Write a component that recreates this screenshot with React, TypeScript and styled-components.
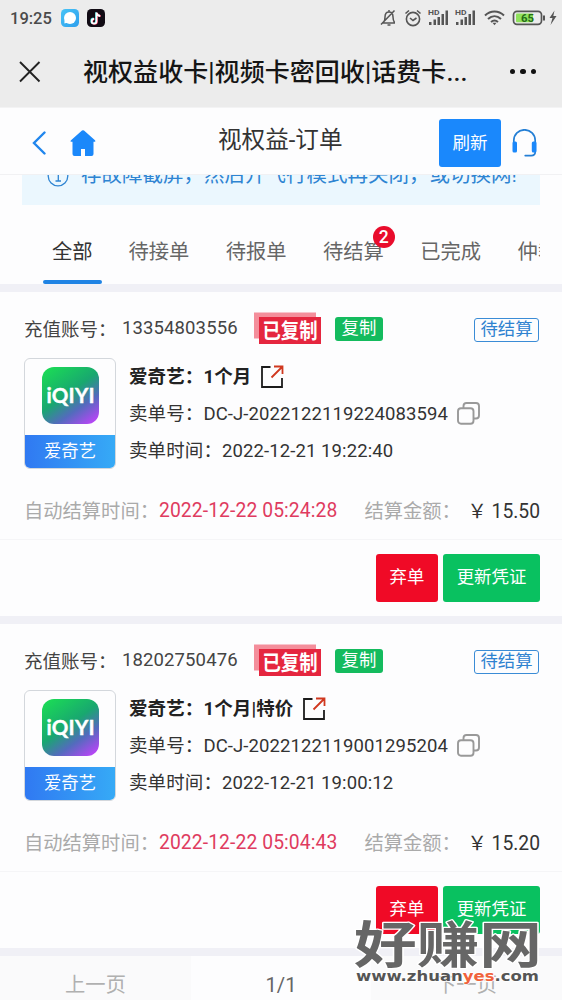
import React from 'react';
import styled, { createGlobalStyle } from 'styled-components';

const Global = createGlobalStyle`
  * { box-sizing: border-box; }
  body {
    margin: 0;
    background: #fdfdfe;
    color: #333;
    font-family: Roboto, "Noto Sans CJK SC", sans-serif;
    overflow: hidden;
  }
  svg { display: block; flex: none; }
`;

const Screen = styled.div`
  position: relative;
  width: 562px;
  height: 1000px;
  overflow: hidden;
  display: flex;
  flex-direction: column;
  white-space: nowrap;
`;

const StatusBar = styled.div`
  height: 36px;
  flex: none;
  display: flex;
  align-items: center;
  padding: 0 5px 0 10px;
  background: #ececec;
`;
const Clock = styled.span`
  width: 51px;
  font-size: 16.5px;
  font-weight: 500;
  letter-spacing: 0;
  color: #4a4a4a;
`;
const StatusIcons = styled.div`
  margin-left: auto;
`;
const AppIcons = styled.div`
  display: flex;
  gap: 8px;
`;

const TitleBar = styled.div`
  height: 71px;
  flex: none;
  display: flex;
  align-items: center;
  padding: 0 26px 0 19px;
  background: #ececec;
`;
const PageTitle = styled.div`
  margin: 2px 0 0 42px;
  width: 400px;
  font-size: 25px;
  line-height: 36px;
  font-weight: 500;
  color: #151515;
  letter-spacing: 0.06px;
`;
const Dots = styled.div`
  margin-left: auto;
  display: flex;
  gap: 5px;
  i { width: 5.5px; height: 5.5px; border-radius: 50%; background: #111; }
`;

const NavBar = styled.header`
  height: 68px;
  flex: none;
  display: flex;
  align-items: center;
  padding: 3px 24px 0 31px;
  border-top: 1px solid #f3f3f4;
  border-bottom: 1px solid #f1f1f3;
`;
const NavTitle = styled.h1`
  margin: -10px 0 0 122px;
  width: 221px;
  font-size: 23.6px;
  font-weight: 400;
  color: #333;
`;
const Refresh = styled.button`
  width: 62px;
  height: 48px;
  margin-right: 11px;
  padding: 0;
  border: 0;
  border-radius: 3px;
  background: #1a88fc;
  color: #fff;
  font: 400 17.5px/24px Roboto, "Noto Sans CJK SC", sans-serif;
`;

const Notice = styled.div`
  height: 30px;
  flex: none;
  margin: 0 22px;
  overflow: hidden;
  background: #ebf7fe;
  color: #2e84d2;
  display: flex;
  align-items: flex-start;
  padding-left: 25px;
`;
const NoticeText = styled.div`
  margin: -15px 0 0 12px;
  font-size: 20.5px;
  line-height: 30px;
`;
const NoticeIcon = styled.div`
  margin-top: -10px;
`;

const Tabs = styled.nav`
  height: 79px;
  flex: none;
  margin: 0 22px 0 43px;
  display: flex;
  overflow: hidden;
  gap: 36.4px;
`;
const Tab = styled.div<{ $active?: boolean }>`
  position: relative;
  flex: none;
  font-size: 20.3px;
  line-height: 30px;
  padding: 32px 0 0 ${(p) => (p.$active ? '9px' : '0')};
  width: ${(p) => (p.$active ? '49px' : 'auto')};
  color: ${(p) => (p.$active ? '#333' : '#666')};
`;
const Underline = styled.i`
  position: absolute;
  left: 0;
  bottom: 0;
  width: 59px;
  height: 4px;
  border-radius: 2px;
  background: #1f83e4;
`;
const Badge = styled.span`
  position: absolute;
  right: -11px;
  top: 21px;
  width: 22px;
  height: 22px;
  border-radius: 50%;
  background: #e90c2c;
  color: #fff;
  font-size: 17.5px;
  font-weight: 500;
  line-height: 22px;
  text-align: center;
`;

const Gap = styled.div`
  height: 8px;
  flex: none;
  background: #f0f0f6;
`;

const Card = styled.section`
  height: 324px;
  flex: none;
  font-size: 18.5px;
`;
const AccountRow = styled.div`
  height: 66px;
  display: flex;
  align-items: center;
  padding: 6px 23px 0 24px;
`;
const AccountLabel = styled.span`
  width: 98px;
  margin-top: -1px;
  color: #444;
`;
const Account = styled.span`
  width: 132px;
  color: #444;
  letter-spacing: 0.12px;
`;
const CopyTag = styled.span`
  margin: 2px 0 0 13px;
  width: 48px;
  height: 24px;
  border-radius: 3px;
  background: #14bb5e;
  color: #fff;
  font-size: 17.4px;
  line-height: 22px;
  text-align: center;
`;
const StateTag = styled.span`
  margin: 4px 0 0 auto;
  width: 65px;
  height: 24px;
  border: 1px solid #3b8cd6;
  border-radius: 3px;
  color: #2f82d0;
  font-size: 17.4px;
  line-height: 21px;
  text-align: center;
`;

const Body = styled.div`
  height: 111px;
  display: flex;
  gap: 13px;
  padding-left: 24px;
`;
const Thumb = styled.div`
  width: 92px;
  height: 111px;
  border: 1px solid #d3d7dc;
  border-radius: 6px;
  overflow: hidden;
  display: flex;
  flex-direction: column;
  align-items: center;
  padding-top: 8px;
`;
const ThumbName = styled.div`
  margin-top: 11px;
  align-self: stretch;
  flex: 1;
  background: linear-gradient(90deg, #3079f2, #36aaf6);
  color: #fff;
  font-size: 17.4px;
  line-height: 32px;
  text-align: center;
`;
const Lines = styled.div`
  display: grid;
  grid-template-rows: repeat(3, 37.3px);
`;
const Line = styled.div<{ $bold?: boolean }>`
  display: flex;
  align-items: center;
  gap: 9px;
  color: ${(p) => (p.$bold ? '#222' : '#333')};
  font-weight: ${(p) => (p.$bold ? 700 : 400)};
  letter-spacing: ${(p) => (p.$bold ? 0.12 : 0.1)}px;
`;
const LineText = styled.span`
  margin-top: -4px;
`;

const SettleRow = styled.div`
  height: 71px;
  display: flex;
  align-items: center;
  padding: 12px 22px 0 24px;
  border-bottom: 1px solid #f5f5f7;
  font-size: 19.3px;
  color: #aaa;
`;
const SettleLabel = styled.span`
  width: 135px;
  margin-top: -1px;
`;
const SettleTime = styled.span`
  margin-top: 1px;
  color: #df3b5f;
  letter-spacing: 0.1px;
`;
const AmountLabel = styled.span`
  margin: -1px 0 0 27px;
`;
const Amount = styled.span`
  margin: -1px 0 0 auto;
  color: #333;
`;
const Actions = styled.div`
  display: flex;
  justify-content: flex-end;
  gap: 5px;
  padding: 14px 22px 0;
`;
const ActionButton = styled.button<{ $danger?: boolean }>`
  width: ${(p) => (p.$danger ? 62 : 97)}px;
  height: 48px;
  padding: 0 0 3px;
  border: 0;
  border-radius: 3px;
  background: ${(p) => (p.$danger ? '#f00a26' : '#09c160')};
  color: #fff;
  font: 400 17.4px/24px Roboto, "Noto Sans CJK SC", sans-serif;
`;

const Pager = styled.footer`
  flex: 1;
  display: grid;
  grid-template-columns: 191px 180px 191px;
  font-size: 20.3px;
  line-height: 58px;
  text-align: center;
`;
const PagerCell = styled.div<{ $current?: boolean }>`
  background: ${(p) => (p.$current ? '#fdfdfe' : '#fafafb')};
  color: ${(p) => (p.$current ? '#666' : '#b0b0b0')};
`;

const Watermark = styled.div`
  position: absolute;
  left: 350px;
  top: 915px;
`;

const SystemIcons = () => (
  <svg width="180" height="24" viewBox="377 6 180 24" fill="none" stroke="#555" strokeWidth="1.6">
    <path d="M382 23h13M383.500 22.500c1-1.500 1.500-3 1.500-5.500 0-3 1.500-5 4-5s4 2 4 5c0 2.500.5 4 1.500 5.500M389 10v2M387.500 25h3M381 24.500 394.500 10.500" strokeWidth="1.5" />
    <circle cx="413" cy="19" r="6.600" />
    <path d="m410 18 3 2.500 3.500-2.500M405.500 13.500l3.500-3M420.500 13.500l-3.500-3" />
    {[428.5, 455.5].map((x) => (
      <g key={x} fill="#555" stroke="none">
        <text x={x - 0.5} y="15" fontSize="7.500" fontWeight="700" fontFamily="Roboto, sans-serif" textLength="11.500" lengthAdjust="spacingAndGlyphs">HD</text>
        <rect x={x + 0.5} y="22" width="2.500" height="3" />
        <rect x={x + 5} y="19.500" width="2.500" height="5.500" />
        <rect x={x + 9} y="17" width="2.500" height="8" />
        <rect x={x + 13} y="14" width="2.500" height="11" />
        <rect x={x + 17} y="10.500" width="2.500" height="14.500" />
      </g>
    ))}
    <path d="M485 15.500c5.500-5.300 13.500-5.300 19 0M488 19c4-3.800 9-3.800 13 0M491 22c2.300-2 4.700-2 7 0" strokeWidth="2" />
    <path d="m492.500 22.800 2 2.400 2-2.400Z" fill="#555" stroke="none" />
    <rect x="513.500" y="11.300" width="28" height="13" rx="3.500" strokeWidth="1.700" />
    <rect x="516" y="13.500" width="17" height="8.700" rx="1" fill="#8fe25c" stroke="none" />
    <path d="M544 15.500v5" strokeWidth="2" />
    <text x="521" y="21.700" fontSize="10.500" fontWeight="700" fontFamily="Roboto, sans-serif" fill="#246b18" stroke="none" textLength="13" lengthAdjust="spacingAndGlyphs">65</text>
    <path d="m554.500 10.500-5 7.500h3l-2 7 6-9h-3.200Z" fill="#555" stroke="none" />
  </svg>
);

const MessengerIcon = () => (
  <svg width="18" height="18" viewBox="0 0 18 18">
    <defs>
      <linearGradient id="sky" x1="0" y1="0" x2="1" y2="1">
        <stop offset="0" stopColor="#48c4f6" />
        <stop offset="1" stopColor="#2d9eed" />
      </linearGradient>
    </defs>
    <rect width="18" height="18" rx="4.500" fill="url(#sky)" />
    <circle cx="9" cy="9" r="6" fill="#fff" />
    <path d="m3.500 11-.1 3.500 3.300-1Z" fill="#fff" />
  </svg>
);

const TikTokIcon = () => (
  <svg width="18" height="18" viewBox="0 0 18 18" fill="none" strokeWidth="1.800">
    <rect width="18" height="18" rx="4.500" fill="#110b14" />
    <path d="M9 3.200v8.700a2.400 2.400 0 1 1-2.400-2.400M9 3.500c.4 2 1.700 3 3.700 3.200" stroke="#35d9dc" />
    <path d="M10 3.800v8.700a2.400 2.400 0 1 1-2.400-2.400M10 4c.4 2 1.700 3 3.700 3.200" stroke="#ee3158" />
    <path d="M9.500 3.500v8.700a2.400 2.400 0 1 1-2.400-2.400M9.500 3.800c.4 2 1.700 3 3.700 3.200" stroke="#fff" />
  </svg>
);

const CloseIcon = () => (
  <svg width="22" height="22" viewBox="0 0 22 22" stroke="#222" strokeWidth="1.900">
    <path d="m1 1 19.500 19.500M20.500 1 1 20.500" />
  </svg>
);

const BackIcon = () => (
  <svg width="16" height="24" viewBox="0 0 16 24" fill="none" stroke="#2186ed" strokeWidth="2.400" strokeLinecap="round">
    <path d="M13.500 1.500 3 12l10.500 10.500" />
  </svg>
);

const HomeIcon = () => (
  <svg width="26" height="26" viewBox="0 0 26 26" style={{ marginLeft: 23 }}>
    <path d="M12 .6q1-.8 2 0l11 9.700q1 1.500-.7 1.500H23.500V24q0 2-2 2H15v-7h-4v7H4.500q-2 0-2-2V11.800H1.300Q0 11.500 1 10.300Z" fill="#1b88fa" />
  </svg>
);

const HeadsetIcon = () => (
  <svg width="25" height="28" viewBox="0 0 25 28" fill="none" stroke="#247fd5" strokeWidth="1.700">
    <path d="M1.800 14v-2.500a10.700 10.700 0 0 1 21.400 0V23q0 3.600-4 3.600h-6" strokeLinecap="round" />
    <rect x="0.500" y="12.500" width="4.500" height="11" rx="1.500" fill="#1b88fa" stroke="none" />
    <rect x="19.800" y="12.500" width="4.700" height="11" rx="1.500" fill="#1b88fa" stroke="none" />
  </svg>
);

const InfoIcon = () => (
  <svg width="22" height="22" viewBox="0 0 22 22" fill="none" stroke="#2e84d2" strokeWidth="1.300">
    <circle cx="11" cy="11" r="9.800" />
    <path d="M9 9h2.300v6.800M8.500 16h5.500" />
  </svg>
);

const CopiedStamp = () => (
  <svg width="68" height="32" viewBox="0 0 68 32">
    <rect x="0" y="0.500" width="62" height="26" fill="#f48e9b" />
    <rect x="5" y="5" width="62" height="27" fill="#e5263f" />
    <text x="8.500" y="26.300" textLength="55" lengthAdjust="spacingAndGlyphs" fontSize="21" fontWeight="700" fontFamily="'Noto Sans CJK SC', sans-serif" fill="#fff">已复制</text>
  </svg>
);

const VideoLogo = () => (
  <svg width="57" height="57" viewBox="0 0 57 57">
    <defs>
      <linearGradient id="brand" x1="0.150" y1="0" x2="0.850" y2="1">
        <stop offset="0" stopColor="#1bd957" />
        <stop offset="0.450" stopColor="#18a86f" />
        <stop offset="0.720" stopColor="#536bbd" />
        <stop offset="1" stopColor="#b646f5" />
      </linearGradient>
    </defs>
    <rect width="57" height="57" rx="12" fill="url(#brand)" />
    <text x="4.500" y="35.800" textLength="48" lengthAdjust="spacing" fontSize="20.500" fontWeight="700" fontFamily="Lato, sans-serif" fill="#fff" stroke="#fff" strokeWidth="0.400">iQIYI</text>
  </svg>
);

const ShareIcon = () => (
  <svg width="24" height="24" viewBox="0 0 24 24" fill="none" strokeWidth="1.800">
    <path d="M10.500 2H2v20h20v-9" stroke="#1c1c1c" />
    <path d="M11.500 12.500 22 2M14 1.500h8.500V9" stroke="#d0381f" />
  </svg>
);

const CopyIcon = () => (
  <svg width="23" height="23" viewBox="0 0 23 23" fill="none" stroke="#999" strokeWidth="1.900">
    <rect x="1" y="6.200" width="15.500" height="15.500" rx="3" />
    <path d="M6.500 6V4q0-3 3-3H19q3 0 3 3v9.500q0 3-3 3h-2.500" />
  </svg>
);

const orders = [
  { account: '13354803556', name: '爱奇艺：1个月', no: 'DC-J-2022122119224083594', time: '2022-12-21 19:22:40', settle: '2022-12-22 05:24:28', amount: '15.50' },
  { account: '18202750476', name: '爱奇艺：1个月|特价', no: 'DC-J-2022122119001295204', time: '2022-12-21 19:00:12', settle: '2022-12-22 05:04:43', amount: '15.20' },
];

type Order = (typeof orders)[number];

const OrderCard = ({ order }: { order: Order }) => (
  <Card>
    <AccountRow>
      <AccountLabel>充值账号：</AccountLabel>
      <Account>{order.account}</Account>
      <CopiedStamp />
      <CopyTag>复制</CopyTag>
      <StateTag>待结算</StateTag>
    </AccountRow>
    <Body>
      <Thumb>
        <VideoLogo />
        <ThumbName>爱奇艺</ThumbName>
      </Thumb>
      <Lines>
        <Line $bold><LineText>{order.name}</LineText><ShareIcon /></Line>
        <Line><LineText>卖单号：{order.no}</LineText><CopyIcon /></Line>
        <Line><LineText>卖单时间：{order.time}</LineText></Line>
      </Lines>
    </Body>
    <SettleRow>
      <SettleLabel>自动结算时间：</SettleLabel>
      <SettleTime>{order.settle}</SettleTime>
      <AmountLabel>结算金额：</AmountLabel>
      <Amount>￥ {order.amount}</Amount>
    </SettleRow>
    <Actions>
      <ActionButton $danger>弃单</ActionButton>
      <ActionButton>更新凭证</ActionButton>
    </Actions>
  </Card>
);

export default function App() {
  return (
    <Screen>
      <Global />
      <StatusBar>
        <Clock>19:25</Clock>
        <AppIcons><MessengerIcon /><TikTokIcon /></AppIcons>
        <StatusIcons><SystemIcons /></StatusIcons>
      </StatusBar>
      <TitleBar>
        <CloseIcon />
        <PageTitle>视权益收卡|视频卡密回收|话费卡...</PageTitle>
        <Dots><i /><i /><i /></Dots>
      </TitleBar>
      <NavBar>
        <BackIcon />
        <HomeIcon />
        <NavTitle>视权益-订单</NavTitle>
        <Refresh>刷新</Refresh>
        <HeadsetIcon />
      </NavBar>
      <Notice>
        <NoticeIcon><InfoIcon /></NoticeIcon>
        <NoticeText>存故障截屏，然后开飞行模式再关闭，或切换网!</NoticeText>
      </Notice>
      <Tabs>
        <Tab $active>全部<Underline /></Tab>
        <Tab>待接单</Tab>
        <Tab>待报单</Tab>
        <Tab>待结算<Badge>2</Badge></Tab>
        <Tab>已完成</Tab>
        <Tab>仲裁中</Tab>
      </Tabs>
      <Gap />
      {orders.map((order) => (
        <React.Fragment key={order.no}>
          <OrderCard order={order} />
          <Gap />
        </React.Fragment>
      ))}
      <Pager>
        <PagerCell>上一页</PagerCell>
        <PagerCell $current>1/1</PagerCell>
        <PagerCell>下一页</PagerCell>
      </Pager>
      <Watermark>
        <svg width="200" height="76" viewBox="350 915 200 76" paintOrder="stroke">
          <text x="354" y="962.500" textLength="188" lengthAdjust="spacingAndGlyphs" fontSize="50" fontWeight="700" fontFamily="'Noto Sans CJK SC', sans-serif" fill="#666" stroke="#fff" strokeWidth="2.500" strokeLinejoin="round">好赚网</text>
          <text x="356" y="980.500" textLength="183" lengthAdjust="spacingAndGlyphs" fontSize="14" fontWeight="700" fontFamily="'DejaVu Sans', sans-serif" fill="#555" stroke="#fff" strokeWidth="1.500">
            www.zhuan<tspan fill="#f0623c">yes</tspan>.com
          </text>
        </svg>
      </Watermark>
    </Screen>
  );
}
